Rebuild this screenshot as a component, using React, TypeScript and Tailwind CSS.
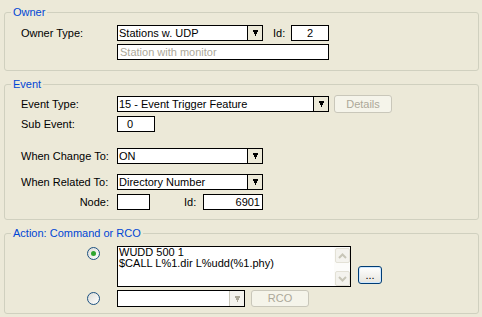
import React from "react";

const Arrow = ({ color }: { color: string }) => (
  <svg width="5" height="6" viewBox="0 0 5 6" fill={color} shapeRendering="crispEdges">
    <path d="M0 0h5v2H0zM1 2h3v2H1zM2 4h1v2H2z" />
  </svg>
);

function Combo({ w, h, text, disabled }: { w: string; h: string; text?: string; disabled?: boolean }) {
  return (
    <div className={`${w} ${h} border border-black bg-white flex shrink-0`}>
      <div className="flex-1 pl-[1px] leading-[14px] whitespace-nowrap overflow-hidden">{text}</div>
      <div
        className={
          disabled
            ? "w-[15px] border-l border-[#C9C7BA] bg-[#F4F3EE] flex items-center justify-center"
            : "w-[15px] border-l border-black bg-[#ECE9D8] flex items-center justify-center"
        }
      >
        <Arrow color={disabled ? "#ACA899" : "#000000"} />
      </div>
    </div>
  );
}

function Radio({ checked }: { checked?: boolean }) {
  return (
    <div className="w-[13px] h-[13px] rounded-full border border-[#1C5180] bg-gradient-to-br from-[#DCDCD7] to-white flex items-center justify-center shrink-0">
      {checked && <div className="w-[5px] h-[5px] rounded-full bg-[#2FA52F]" />}
    </div>
  );
}

const Chevron = ({ up }: { up?: boolean }) => (
  <svg width="9" height="6" viewBox="0 0 9 6">
    <polyline
      points={up ? "1,5 4.5,1.5 8,5" : "1,1 4.5,4.5 8,1"}
      fill="none"
      stroke="#C8C6B8"
      strokeWidth="2"
    />
  </svg>
);

function Group({ title, h, children }: { title: string; h: string; children: React.ReactNode }) {
  return (
    <fieldset className={`w-[475px] ${h} border border-[#D0D0BF] rounded-[3px] p-0 m-0 min-w-0`}>
      <legend className="ml-[6px] px-[2px] text-[#0046D5] leading-[13px]">{title}</legend>
      {children}
    </fieldset>
  );
}

export default function App() {
  return (
    <div className="w-[482px] h-[317px] bg-[#ECE9D8] font-['Liberation_Sans',Arial,sans-serif] text-[11px] text-black overflow-hidden pt-[6px] px-[4px] flex flex-col gap-[7px]">
      <Group title="Owner" h="h-[65px]">
        <div className="pl-[16px] pt-[6px] flex flex-col">
          <div className="flex items-center h-[16px]">
            <div className="w-[96px] leading-[13px]">Owner Type:</div>
            <Combo w="w-[146px]" h="h-[16px]" text="Stations w. UDP" />
            <div className="ml-[10px] w-[18px] leading-[13px]">Id:</div>
            <div className="w-[38px] h-[16px] border border-black bg-white text-center leading-[14px]">2</div>
          </div>
          <div className="flex items-center h-[16px] mt-[3px]">
            <div className="w-[96px]" />
            <div className="w-[212px] h-[16px] border border-black bg-white pl-[2px] leading-[14px] text-[#ACA899]">
              Station with monitor
            </div>
          </div>
        </div>
      </Group>

      <Group title="Event" h="h-[142px]">
        <div className="pl-[16px] pt-[4px] flex flex-col">
          <div className="flex items-center h-[18px]">
            <div className="w-[96px] leading-[13px]">Event Type:</div>
            <Combo w="w-[212px]" h="h-[16px]" text="15 - Event Trigger Feature" />
            <div className="ml-[5px] w-[58px] h-[18px] border border-[#C9C7BA] rounded-[3px] bg-[#F5F4EA] text-[#ACA899] flex items-center justify-center">
              Details
            </div>
          </div>
          <div className="flex items-center h-[16px] mt-[3px]">
            <div className="w-[96px] leading-[13px]">Sub Event:</div>
            <div className="w-[38px] h-[16px] border border-black bg-white pl-[9px] leading-[14px]">0</div>
          </div>
          <div className="flex items-center h-[16px] mt-[16px]">
            <div className="w-[96px] leading-[13px]">When Change To:</div>
            <Combo w="w-[146px]" h="h-[16px]" text="ON" />
          </div>
          <div className="flex items-center h-[16px] mt-[10px]">
            <div className="w-[96px] leading-[13px]">When Related To:</div>
            <Combo w="w-[146px]" h="h-[16px]" text="Directory Number" />
          </div>
          <div className="flex items-center h-[16px] mt-[4px]">
            <div className="w-[96px] pr-[8px] text-right leading-[13px]">Node:</div>
            <div className="w-[33px] h-[16px] border border-black bg-white" />
            <div className="ml-[34px] w-[19px] leading-[13px]">Id:</div>
            <div className="w-[60px] h-[16px] border border-black bg-white text-right pr-[2px] leading-[14px]">6901</div>
          </div>
        </div>
      </Group>

      <Group title="Action: Command or RCO" h="h-[87px]">
        <div className="pl-[16px] pt-[6px] flex flex-col">
          <div className="flex items-start h-[41px]">
            <div className="w-[96px] pl-[66px] pt-[1px]">
              <Radio checked />
            </div>
            <div className="w-[234px] h-[41px] border border-black bg-white flex">
              <div className="flex-1 pl-[1px] leading-[11px] whitespace-nowrap overflow-hidden">
                <div>WUDD 500 1</div>
                <div>$CALL L%1.dir L%udd(%1.phy)</div>
              </div>
              <div className="w-[16px] bg-[#FCFCFA] flex flex-col justify-between pl-[1px] pt-[1px]">
                <div className="w-[15px] h-[15px] rounded-[2px] border border-[#E3E1D6] bg-[#F4F3EE] flex items-center justify-center">
                  <Chevron up />
                </div>
                <div className="w-[15px] h-[15px] rounded-[2px] border border-[#E3E1D6] bg-[#F4F3EE] flex items-center justify-center">
                  <Chevron />
                </div>
              </div>
            </div>
            <div className="ml-[7px] mt-[20px] w-[24px] h-[18px] border border-[#003C74] rounded-[3px] bg-gradient-to-b from-white to-[#E6E5DE] shadow-[inset_0_0_0_1px_#CEE7FF] flex items-center justify-center leading-[13px]">
              ...
            </div>
          </div>
          <div className="flex items-center h-[17px] mt-[3px]">
            <div className="w-[96px] pl-[66px]">
              <Radio />
            </div>
            <Combo w="w-[128px]" h="h-[17px]" disabled />
            <div className="ml-[6px] w-[58px] h-[17px] border border-[#C9C7BA] rounded-[3px] bg-[#F5F4EA] text-[#ACA899] flex items-center justify-center">
              RCO
            </div>
          </div>
        </div>
      </Group>
    </div>
  );
}
